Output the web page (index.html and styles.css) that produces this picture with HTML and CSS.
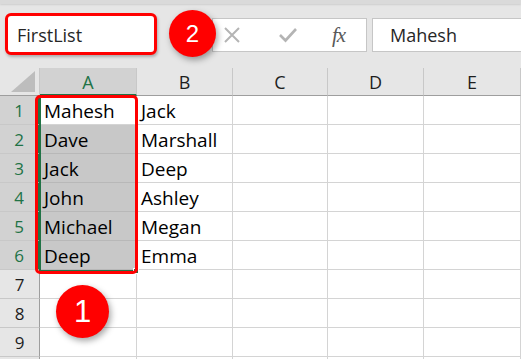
FILE: index.html
```html
<!DOCTYPE html>
<html>
<head>
<meta charset="utf-8">
<link rel="stylesheet" href="styles.css">
</head>
<body>
<div class="app">
  <div class="topstrip"></div>
  <div class="fbar">
    <div class="namebox">FirstList</div>
    <div class="tools">
      <svg class="ico-x" width="18" height="18" viewBox="0 0 18 18"><path d="M2 2 L16 16 M16 2 L2 16" stroke="#b4b4b4" stroke-width="2" fill="none"/></svg>
      <svg class="ico-ok" width="20" height="16" viewBox="0 0 20 16"><path d="M2 8 L7.5 13.5 L18 2" stroke="#b4b4b4" stroke-width="2.6" fill="none"/></svg>
      <span class="fx">fx</span>
    </div>
    <div class="finput">Mahesh</div>
  </div>
  <div class="sheet">
    <div class="corner"><svg width="24" height="21" viewBox="0 0 24 21"><path d="M24 0 L24 21 L0 21 Z" fill="#bdbdbd"/></svg></div>
    <div class="ch sel">A</div>
    <div class="ch">B</div>
    <div class="ch">C</div>
    <div class="ch">D</div>
    <div class="ch">E</div>
    <div class="ch last"></div>

    <div class="rh sel">1</div><div class="c active">Mahesh</div><div class="c">Jack</div><div class="c"></div><div class="c"></div><div class="c"></div><div class="c"></div>
    <div class="rh sel">2</div><div class="c hl">Dave</div><div class="c">Marshall</div><div class="c"></div><div class="c"></div><div class="c"></div><div class="c"></div>
    <div class="rh sel">3</div><div class="c hl">Jack</div><div class="c">Deep</div><div class="c"></div><div class="c"></div><div class="c"></div><div class="c"></div>
    <div class="rh sel">4</div><div class="c hl">John</div><div class="c">Ashley</div><div class="c"></div><div class="c"></div><div class="c"></div><div class="c"></div>
    <div class="rh sel">5</div><div class="c hl">Michael</div><div class="c">Megan</div><div class="c"></div><div class="c"></div><div class="c"></div><div class="c"></div>
    <div class="rh sel">6</div><div class="c hl">Deep</div><div class="c">Emma</div><div class="c"></div><div class="c"></div><div class="c"></div><div class="c"></div>
    <div class="rh">7</div><div class="c"></div><div class="c"></div><div class="c"></div><div class="c"></div><div class="c"></div><div class="c"></div>
    <div class="rh">8</div><div class="c"></div><div class="c"></div><div class="c"></div><div class="c"></div><div class="c"></div><div class="c"></div>
    <div class="rh">9</div><div class="c"></div><div class="c"></div><div class="c"></div><div class="c"></div><div class="c"></div><div class="c"></div>
    <div class="rh"></div><div class="c"></div><div class="c"></div><div class="c"></div><div class="c"></div><div class="c"></div><div class="c"></div>
  </div>
  <div class="selbox"><span class="handle"></span></div>
  <div class="redbox"></div>
  <div class="badge b1">1</div>
  <div class="badge b2">2</div>
</div>
</body>
</html>
```

FILE: styles.css
```css
* { box-sizing: border-box; }
html, body { margin: 0; padding: 0; }
body {
  width: 521px;
  height: 359px;
  overflow: hidden;
  background: #e6e6e6;
  font-family: "Open Sans", "Liberation Sans", sans-serif;
}
.app { position: relative; width: 521px; height: 359px; overflow: hidden; }

.topstrip {
  height: 4px;
  background: #dadada;
  box-shadow: 0 1px 2px rgba(0,0,0,0.1);
}

.fbar {
  display: flex;
  align-items: flex-start;
  height: 64px;
}
.fbar > * { flex-shrink: 0; }
.namebox {
  margin-left: 5px;
  margin-top: 9px;
  width: 152px;
  height: 42px;
  background: #fff;
  border: 3px solid #f00;
  border-radius: 6px;
  box-shadow: 1px 2px 3px rgba(0,0,0,0.25);
  font-size: 18px;
  line-height: 38px;
  padding-left: 9px;
  color: #262626;
}
.tools {
  margin-left: 55px;
  margin-top: 14px;
  width: 155px;
  height: 34px;
  background: #fff;
  border: 1px solid #c6c6c6;
  display: flex;
  align-items: center;
}
.ico-x { margin-left: 10px; }
.ico-ok { margin-left: 37px; }
.fx {
  margin-left: 34px;
  font-family: "Liberation Serif", serif;
  font-style: italic;
  font-size: 21px;
  color: #595959;
  letter-spacing: -1px;
}
.finput {
  margin-left: 5px;
  margin-top: 14px;
  width: 200px;
  height: 34px;
  background: #fff;
  border: 1px solid #c6c6c6;
  font-size: 18px;
  line-height: 33px;
  padding-left: 17px;
  color: #262626;
}

.sheet {
  display: grid;
  grid-template-columns: 40px 97px 96px 95px 96px 97px 20px;
  grid-template-rows: 28px;
  grid-auto-rows: 29px;
  background: #fff;
}
.corner {
  background: #e6e6e6;
  border-right: 1px solid #c8c8c8;
  border-bottom: 1px solid #9e9e9e;
  display: flex;
  align-items: flex-end;
  justify-content: flex-end;
  padding: 0 4px 3px 0;
}
.ch {
  background: #e6e6e6;
  border-right: 1px solid #c8c8c8;
  border-bottom: 1px solid #9e9e9e;
  text-align: center;
  font-size: 18px;
  line-height: 28px;
  color: #1e1e1e;
}
.ch.sel {
  background: #d2d2d2;
  color: #217346;
  border-bottom: 2px solid #217346;
}
.rh {
  background: #e6e6e6;
  border-right: 1px solid #9e9e9e;
  border-bottom: 1px solid #c8c8c8;
  text-align: center;
  font-size: 17px;
  line-height: 30px;
  color: #1e1e1e;
}
.rh.sel {
  background: #d2d2d2;
  color: #217346;
  border-right: 2px solid #217346;
}
.c {
  border-right: 1px solid #d4d4d4;
  border-bottom: 1px solid #d4d4d4;
  font-size: 19px;
  line-height: 30px;
  padding-left: 4px;
  color: #000;
  white-space: nowrap;
}
.c.hl { background: #c8c8c8; border-bottom-color: #b8b8b8; }
.c.active { background: #fff; }

.selbox {
  position: absolute;
  left: 39px;
  top: 96px;
  width: 98px;
  height: 176px;
  border: 2px solid #217346;
  border-right-color: transparent;
  border-top-color: transparent;
}
.handle {
  position: absolute;
  right: -4px;
  bottom: -4px;
  width: 6px;
  height: 6px;
  background: #217346;
  border: 1px solid #fff;
}
.redbox {
  position: absolute;
  left: 35px;
  top: 95px;
  width: 103px;
  height: 179px;
  border: 3px solid #f00;
  border-radius: 5px;
}
.badge {
  position: absolute;
  border-radius: 50%;
  background: #f00;
  color: #fff;
  font-family: "Liberation Sans", Arial, sans-serif;
  display: flex;
  align-items: center;
  justify-content: center;
  box-shadow: 2px 3px 6px rgba(0,0,0,0.35);
}
.b1 {
  left: 56px;
  top: 285px;
  width: 53px;
  height: 53px;
  font-size: 31px;
}
.b2 {
  left: 169px;
  top: 10px;
  width: 47px;
  height: 47px;
  font-size: 24px;
}
```
